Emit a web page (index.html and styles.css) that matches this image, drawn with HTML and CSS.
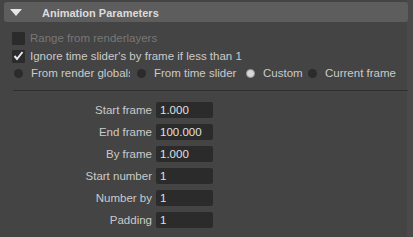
FILE: index.html
```html
<!DOCTYPE html>
<html lang="en">

<head>
    <meta charset="UTF-8">
    <title>Animation Parameters</title>
    <link rel="stylesheet" href="styles.css">
</head>

<body>
    <div class="painel">
        <div class="cabecalho">
            <svg class="seta" width="12" height="7" viewBox="0 0 12 7"><polygon points="0,0 12,0 6,7" fill="#e6e6e6"/></svg>
            <span class="titulo">Animation Parameters</span>
        </div>

        <div class="conteudo">
            <div class="linha desativado">
                <span class="caixa"></span>
                <span>Range from renderlayers</span>
            </div>
            <div class="linha">
                <span class="caixa">
                    <svg width="11" height="10" viewBox="0 0 11 10"><polyline points="1.5,5 4,8 9.5,1" fill="none" stroke="#e8e8e8" stroke-width="2"/></svg>
                </span>
                <span>Ignore time slider's by frame if less than 1</span>
            </div>

            <div class="radios">
                <div class="opcao"><span class="bola"></span><span class="corta">From render globals</span></div>
                <div class="opcao"><span class="bola"></span><span>From time slider</span></div>
                <div class="opcao"><span class="bola marcada"></span><span>Custom</span></div>
                <div class="opcao"><span class="bola"></span><span>Current frame</span></div>
            </div>

            <div class="separador"></div>

            <div class="campos">
                <label>Start frame</label><div class="campo">1.000</div>
                <label>End frame</label><div class="campo">100.000</div>
                <label>By frame</label><div class="campo">1.000</div>
                <label>Start number</label><div class="campo">1</div>
                <label>Number by</label><div class="campo">1</div>
                <label>Padding</label><div class="campo">1</div>
            </div>
        </div>
    </div>
</body>

</html>
```

FILE: styles.css
```css
* {
    margin: 0;
    padding: 0;
    box-sizing: border-box;
}

body {
    width: 413px;
    height: 237px;
    /* faixa mais clara na direita, tipo a calha da barra de rolagem */
    background: linear-gradient(to right, #444444 407px, #4a4a4a 407px);
    font-family: "Liberation Sans", Arial, sans-serif;
    font-size: 11.5px;
    color: #cacaca;
    overflow: hidden;
}

.painel {
    padding: 2px 5px 0 4px;
}

.cabecalho {
    height: 20px;
    background-color: #5d5d5d;
    border-radius: 3px;
    display: flex;
    align-items: center;
}

.seta {
    margin-left: 6px;
    margin-top: 1px;
}

.titulo {
    margin-left: 20px;
    margin-top: 1px;
    font-weight: bold;
    font-size: 11px;
    color: #dcdcdc;
}

.conteudo {
    padding: 7px 0 0 8px;
}

.linha {
    height: 18px;
    display: flex;
    align-items: center;
    gap: 5px;
    white-space: nowrap;
}

.desativado {
    color: #777777;
}

.caixa {
    width: 13px;
    height: 13px;
    background-color: #2b2b2b;
    border-radius: 1px;
    display: flex;
    align-items: center;
    justify-content: center;
}

.radios {
    height: 16px;
    display: grid;
    grid-template-columns: 123px 109px 62px 1fr;
    align-items: center;
    margin-left: 2px;
    white-space: nowrap;
}

.opcao {
    display: flex;
    align-items: center;
    gap: 8px;
    overflow: hidden;
}

/* o texto do primeiro radio fica cortado, igual no maya */
.corta {
    flex: none;
    width: 99px;
    overflow: hidden;
}

.bola {
    flex: none;
    width: 9px;
    height: 9px;
    border-radius: 50%;
    background-color: #2b2b2b;
}

.marcada {
    background-color: #d8d8d8;
    border: 1px solid #9a9a9a;
}

.separador {
    height: 1px;
    background-color: #2e2e2e;
    margin: 9px 0 0 1px;
}

.campos {
    margin-top: 11px;
    display: grid;
    grid-template-columns: 140px 57px;
    column-gap: 4px;
    row-gap: 6px;
    align-items: center;
}

.campos label {
    text-align: right;
}

.campo {
    height: 16px;
    background-color: #2b2b2b;
    border-radius: 2px;
    padding-left: 4px;
    line-height: 16px;
    color: #e0e0e0;
}
```
